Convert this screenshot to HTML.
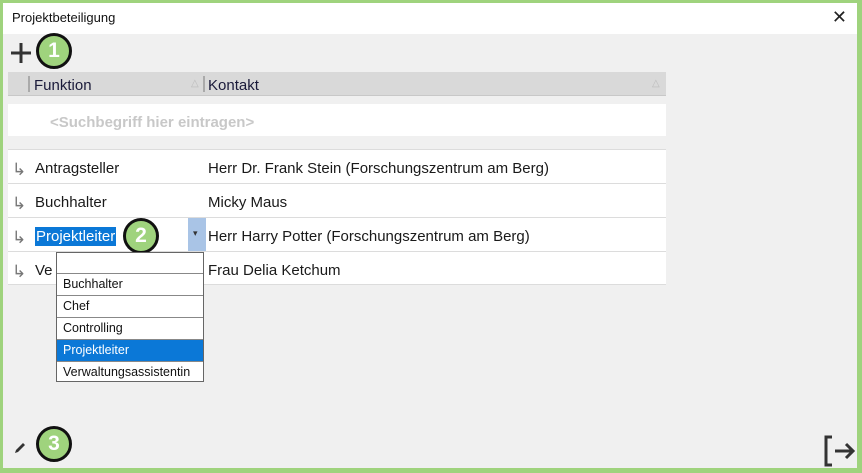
<!DOCTYPE html>
<html><head><meta charset="utf-8"><style>
*{margin:0;padding:0;box-sizing:border-box}
body{width:862px;height:473px;overflow:hidden;background:#9fd37d;font-family:"Liberation Sans",Arial,sans-serif;position:relative}
.win{position:absolute;left:3px;top:3px;width:854px;height:465px;background:#f0f0f0}
.title{position:absolute;left:0;top:0;width:854px;height:31px;background:#fff;font-size:13px;color:#111;padding:7px 0 0 9px}
.x{position:absolute;right:10px;top:4px;font-size:18px;color:#222}
.abs{position:absolute}
.hdr{left:5px;top:69px;width:658px;height:24px;background:#d9d9d9;border-bottom:1px solid #c8c8c8;font-size:15px;color:#1a1a3a}
.search{left:5px;top:101px;width:658px;height:32px;background:#fff;font-size:15px;color:#c8c8c8;font-weight:bold;padding:10px 0 0 42px}
.row{left:5px;width:658px;height:34px;background:#fff;border-top:1px solid #dcdcdc;font-size:15px;color:#1a1a1a}
.row span{position:absolute;top:10px}
.ar{left:4px;color:#777;font-size:17px}
.f{left:27px}.k{left:200px}
.badge{position:absolute;width:36px;height:36px;border-radius:50%;background:#9fd37d;border:3px solid #111;color:#fff;font-weight:bold;font-size:21px;text-align:center;line-height:30px}
.dd{left:53px;top:249px;width:148px;height:130px;background:#fff;border:1px solid #666}
.dd div{height:22px;border-top:1px solid #888;font-size:12.5px;padding:3px 0 0 6px;color:#111}
</style></head><body>
<div class="win">
<div class="title">Projektbeteiligung<span class="x">✕</span></div>
<svg class="abs" style="left:7px;top:39px" width="22" height="22"><path d="M11 1 V21 M1 11 H21" stroke="#333" stroke-width="3"/></svg>
<div class="badge" style="left:33px;top:30px">1</div>
<div class="abs hdr"><div class="abs" style="left:20px;top:4px;width:2px;height:16px;background:#aaa"></div><span class="abs" style="left:26px;top:5px">Funktion</span><span class="abs" style="left:183px;top:6px;font-size:10px;color:#bbb">△</span><div class="abs" style="left:195px;top:4px;width:2px;height:16px;background:#aaa"></div><span class="abs" style="left:200px;top:5px">Kontakt</span><span class="abs" style="left:644px;top:6px;font-size:10px;color:#bbb">△</span></div>
<div class="abs search">&lt;Suchbegriff hier eintragen&gt;</div>
<div class="abs row" style="top:146px"><span class="ar">↳</span><span class="f">Antragsteller</span><span class="k">Herr Dr. Frank Stein (Forschungszentrum am Berg)</span></div>
<div class="abs row" style="top:180px"><span class="ar">↳</span><span class="f">Buchhalter</span><span class="k">Micky Maus</span></div>
<div class="abs row" style="top:214px"><span class="ar">↳</span><span class="f" style="background:#0b78d7;color:#fff;top:9px;padding:1px 1px">Projektleiter</span><div class="abs" style="left:180px;top:0;width:18px;height:33px;background:#a9c4e6"><span style="left:5px;top:10px;font-size:9px;color:#333">▾</span></div><span class="k">Herr Harry Potter (Forschungszentrum am Berg)</span></div>
<div class="abs row" style="top:248px;border-bottom:1px solid #dcdcdc"><span class="ar">↳</span><span class="f">Ve</span><span class="k">Frau Delia Ketchum</span></div>
<div class="badge" style="left:120px;top:215px">2</div>
<div class="abs dd"><div style="border-top:none;height:20px"></div><div>Buchhalter</div><div>Chef</div><div>Controlling</div><div style="background:#0b78d7;color:#fff">Projektleiter</div><div>Verwaltungsassistentin</div></div>
<svg class="abs" style="left:10px;top:438px" width="14" height="14"><path d="M2 12 L3 9 L10 2 L12 4 L5 11 Z" fill="#333"/></svg>
<div class="badge" style="left:33px;top:423px;width:36px;height:36px">3</div>
<svg class="abs" style="left:820px;top:432px" width="34" height="32"><path d="M9 2 H3 V30 H9" fill="none" stroke="#333" stroke-width="3"/><path d="M12 16 H30 M23 9 L30 16 L23 23" fill="none" stroke="#333" stroke-width="3"/></svg>
</div>
</body></html>
